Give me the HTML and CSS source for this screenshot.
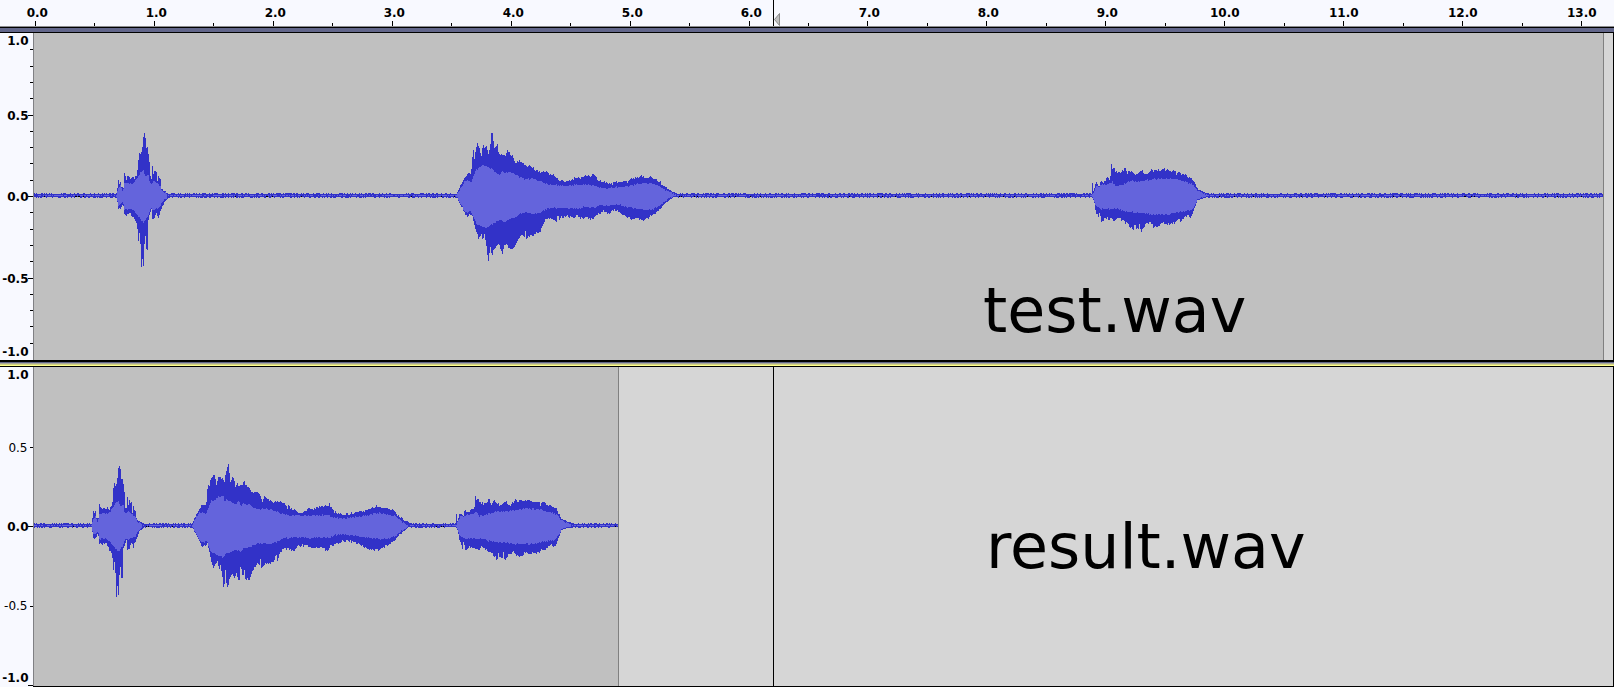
FILE: index.html
```html
<!DOCTYPE html>
<html lang="en">
<head>
<meta charset="utf-8">
<title>Audio tracks</title>
<link rel="stylesheet" href="styles.css">
</head>
<body>
<main class="editor">
  <header class="timeline">
    <svg class="timeline-scale" id="timeline" width="1614" height="26"></svg>
    <svg class="playhead" width="8" height="26" viewBox="0 0 8 26">
      <path d="M0 0h1v26h-1z" fill="#000"/>
      <path d="M1.5 19.5L6.5 13.5V25.5Z" fill="#c0c0c0" stroke="#8a8a8a"/>
    </svg>
  </header>
  <div class="divider"></div>
  <section class="track track-test">
    <svg class="level-scale" id="scale-test" width="33" height="327"></svg>
    <div class="lane">
      <div class="clip"><svg class="wave" id="wave-test" width="1569" height="327" viewBox="34 33 1569 327"></svg></div>
      <span class="name">test.wav</span>
    </div>
  </section>
  <div class="divider-focus"></div>
  <section class="track track-result">
    <svg class="level-scale" id="scale-result" width="33" height="319"></svg>
    <div class="lane">
      <div class="clip"><svg class="wave" id="wave-result" width="584" height="319" viewBox="34 367 584 319"></svg></div>
      <i class="cursor"></i>
      <span class="name">result.wav</span>
    </div>
  </section>
  <footer class="bottom-edge"></footer>
</main>
<script src="tracks.js"></script>
</body>
</html>
```
FILE: styles.css
```css
body {
  margin: 0;
  background: #f8f9ff;
  font-family: "DejaVu Sans", sans-serif;
  color: #000;
}
.editor {
  width: 1614px;
  height: 687px;
  display: flex;
  flex-direction: column;
  overflow: hidden;
}
svg { display: block; }
.timeline {
  position: relative;
  height: 26px;
  border-bottom: 1px solid #8c8c90;
}
.playhead { position: absolute; left: 773px; top: 0; }
.scale-label { font-size: 12px; fill: #000; }
.strong { font-weight: bold; }
.divider {
  height: 4px;
  background: #62668a;
  border-top: 1px solid #000;
  border-bottom: 1px solid #000;
}
.divider-focus {
  height: 7px;
  background: linear-gradient(#000 0 2px, #62668a 2px 3px, #a9a99b 3px 4px, #d0d080 4px 5px, #ffff8c 5px 6px, #000 6px);
}
.track { display: flex; }
.track-test { height: 327px; }
.track-result { height: 319px; }
.lane {
  position: relative;
  flex: 1;
  background: #d6d6d6;
  border-left: 1px solid #808084;
  border-right: 1px solid #000;
}
.clip {
  width: max-content;
  background: #c0c0c0;
  border-right: 1px solid #808080;
}
.wave { shape-rendering: crispEdges; }
.peak { fill: #3232c8; }
.rms { fill: #6464dc; }
.cursor {
  position: absolute;
  left: 739px;
  top: 0;
  bottom: 0;
  width: 1px;
  background: #000;
}
.name {
  position: absolute;
  font-size: 61.8px;
  line-height: 72px;
  white-space: nowrap;
}
.track-test .name { left: 949px; top: 242px; }
.track-result .name { left: 952px; top: 144px; }
.bottom-edge {
  height: 1px;
  margin-left: 33px;
  background: #000;
}
```
FILE: tracks.js
```js
const NS = 'http://www.w3.org/2000/svg';

function add(parent, tag, attrs, text) {
  const node = document.createElementNS(NS, tag);
  for (const key in attrs) node.setAttribute(key, attrs[key]);
  if (text) node.textContent = text;
  parent.appendChild(node);
}

// Time ruler: one long tick per second, one short tick per half second.
const timeline = document.getElementById('timeline');
for (let i = 0; i <= 26; i++) {
  const x = Math.round(35 + i * 59.46);
  const major = i % 2 === 0;
  add(timeline, 'rect', { x, y: major ? 21 : 23, width: 1, height: major ? 5 : 3 });
  if (major) {
    const label = (i / 2).toFixed(1);
    add(timeline, 'text', { x: x - (label.length > 3 ? 14 : 8.3), y: 17, class: 'scale-label strong' }, label);
  }
}

// Level rulers: [label, baseline, bold]; ticks are [y, length].
function levelScale(id, labels, ticks) {
  const svg = document.getElementById(id);
  for (const [text, y, bold] of labels)
    add(svg, 'text', { x: bold ? 28.5 : 27.5, y, 'text-anchor': 'end', class: 'scale-label' + (bold ? ' strong' : '') }, text);
  for (const [y, length] of ticks)
    add(svg, 'rect', { x: 33 - length, y, width: length, height: 1 });
}
const testTicks = [];
for (let i = -9; i <= 9; i++) testTicks.push([Math.round(163 + i * 16.3), i % 5 === 0 ? 5 : 3]);
levelScale('scale-test',
  [['1.0', 12, 1], ['0.5', 87, 1], ['0.0', 168, 1], ['-0.5', 250, 1], ['-1.0', 323, 1]], testTicks);
levelScale('scale-result',
  [['1.0', 12, 1], ['0.5', 85, 0], ['0.0', 164, 1], ['-0.5', 243, 0], ['-1.0', 315, 1]],
  [[80, 3], [159, 5], [239, 3], [318, 5]]);

// Envelopes, in thirds of a pixel from the origin (x, y).
const first = {
  x: 100, y: 120,
  peakTop: [48,222,51,205,54,182,57,190,60,185,63,200,69,203,72,162,78,175,84,170,90,178,96,170,102,175,108,165,111,150,114,115,117,98,120,105,123,98,126,80,129,50,132,42,135,55,138,82,141,80,144,100,147,125,150,170,153,175,156,140,159,160,162,152,168,158,171,185,174,168,177,175,180,180,183,205,189,212,195,215,201,220],
  peakBottom: [48,232,51,245,54,265,60,268,66,255,69,260,72,282,81,284,90,280,96,290,102,300,108,310,111,328,114,365,117,340,120,375,123,443,126,415,129,437,132,375,135,350,138,387,141,385,144,300,148,285,153,270,156,300,162,295,168,278,174,292,180,275,186,262,192,245,200,238,207,232],
  rmsTop: [48,224,54,207,60,198,66,213,72,190,84,190,96,190,105,182,114,170,120,158,129,152,135,168,144,162,148,190,153,190,160,182,170,190,180,200,186,215,200,220],
  rmsBottom: [48,232,54,255,62,252,68,245,72,268,84,266,94,268,105,278,114,290,129,308,138,295,144,285,150,268,160,270,170,265,180,260,186,245,200,234]
};
const second = {
  x: 450, y: 125,
  peakTop: [18,208,27,190,33,176,42,158,48,150,54,145,60,148,64,125,67,85,70,72,73,110,76,65,82,55,87,68,93,95,97,58,103,65,109,62,113,92,118,72,121,45,124,18,127,30,130,52,133,75,137,65,141,58,145,85,148,95,154,82,160,92,166,92,170,72,175,80,180,92,188,92,192,110,200,112,207,106,215,112,222,122,230,128,238,122,248,130,260,138,272,140,284,138,292,142,300,148,310,150,318,160,330,168,345,168,360,168,370,160,385,160,395,158,405,152,420,154,428,145,434,152,440,164,452,170,465,172,475,178,490,174,505,172,520,168,532,172,540,164,552,160,565,156,574,152,585,158,600,156,610,162,620,165,630,172,638,184,648,188,656,196,668,200,678,206],
  peakBottom: [18,214,27,232,35,248,42,265,50,275,57,270,65,268,70,290,75,315,80,320,83,345,88,335,94,325,98,350,102,325,106,350,109,372,112,395,115,413,118,370,121,360,124,398,130,375,138,362,146,360,150,370,155,387,160,365,168,355,175,370,177,372,178,340,180,372,182,375,190,370,197,355,207,340,215,325,222,338,224,345,226,288,228,345,232,335,240,330,252,328,260,322,270,318,272,320,274,290,276,300,285,282,300,280,320,290,322,256,325,285,335,275,350,272,365,278,380,272,395,280,405,275,420,285,432,275,445,265,460,258,475,265,490,254,505,260,520,270,532,276,545,283,560,280,575,286,590,280,605,272,618,262,630,248,640,240,655,228,670,216,678,212],
  rmsTop: [18,210,30,190,42,170,52,165,62,175,70,150,76,136,88,126,96,122,106,120,118,128,130,138,148,150,156,138,165,145,175,140,188,145,205,155,225,164,245,160,265,168,285,175,310,180,345,182,370,180,400,178,430,180,450,188,475,190,500,186,530,184,560,178,580,174,605,176,625,182,640,192,655,200,675,208],
  rmsBottom: [18,213,30,235,42,258,52,262,62,258,70,280,78,295,92,302,106,308,116,304,130,295,148,285,160,290,175,284,195,278,205,268,225,262,250,268,270,262,290,252,310,248,350,250,380,252,400,246,430,248,450,240,475,242,500,238,530,246,560,250,580,254,610,252,630,240,645,228,660,218,675,212]
};
const secondTrimmed = {
  x: 185, y: 455,
  peakTop: [21,208,27,190,33,178,42,162,48,152,54,148,62,152,65,125,67,85,70,90,73,98,76,68,82,64,86,57,90,75,93,88,97,78,100,65,106,68,112,72,117,82,121,52,125,45,128,24,131,40,134,80,138,75,142,60,146,75,150,98,155,84,161,94,170,90,176,75,181,90,190,96,196,112,205,114,212,108,220,115,226,122,232,145,236,124,244,132,258,136,268,142,280,140,292,140,300,150,306,158,310,145,316,160,330,166,345,172,360,168,370,162,385,163,395,158,405,154,420,154,432,148,438,158,445,168,458,176,475,178,490,176,505,174,520,168,535,170,545,164,560,158,574,154,585,160,600,160,612,162,625,166,634,178,642,186,650,188,656,198,668,200,678,206],
  peakBottom: [21,214,27,230,35,245,42,260,52,275,60,270,66,265,72,290,76,312,84,340,90,330,97,320,101,348,106,328,109,355,112,375,115,408,118,375,119,325,122,380,127,397,133,370,141,358,148,370,154,350,158,380,163,375,166,315,169,355,175,358,178,334,180,370,186,372,193,372,200,350,210,332,220,325,224,330,226,292,228,340,236,328,250,325,262,320,269,315,271,290,276,320,282,295,290,285,300,280,315,284,325,287,335,275,350,270,370,276,390,278,405,276,424,288,434,275,450,266,470,260,490,258,510,262,530,272,548,282,575,285,595,278,610,268,630,256,640,240,655,230,668,218,678,212],
  rmsTop: [21,210,30,190,42,174,52,170,62,178,70,155,78,138,90,132,100,126,113,122,118,142,124,132,140,145,152,148,160,138,166,152,172,146,190,148,205,158,225,164,245,160,265,166,285,174,310,180,345,183,370,182,400,180,430,180,445,188,475,190,500,187,530,183,560,178,580,174,610,178,628,182,640,194,655,204,668,212],
  rmsBottom: [21,213,30,235,42,256,52,264,62,258,70,275,78,292,92,298,113,308,120,298,140,288,155,284,165,290,172,282,190,278,210,268,235,264,250,268,275,260,295,250,325,248,350,246,380,250,400,246,430,248,450,240,475,238,500,242,530,245,560,250,580,252,610,250,630,242,645,230,660,220,672,213]
};
const third = {
  x: 1080, y: 155,
  peakTop: [34,116,36,84,39,110,42,100,46,80,50,88,57,90,62,76,68,80,76,76,82,65,88,76,91,58,93,30,97,45,101,38,105,48,112,52,120,56,130,46,135,40,140,58,148,45,155,52,165,58,175,55,182,45,190,52,196,60,206,52,214,40,220,52,226,45,240,46,252,42,262,46,272,50,284,45,288,62,292,52,300,54,312,60,325,66,334,68,341,82,347,92,352,104,364,106,370,112,385,114],
  peakBottom: [34,125,38,132,43,150,46,176,50,175,54,190,58,168,62,200,67,198,74,186,85,192,95,190,103,200,110,186,120,190,130,200,140,204,146,212,152,216,158,228,164,200,166,226,170,212,173,225,177,205,182,234,188,218,196,208,208,202,220,216,235,212,245,202,260,208,275,206,285,202,292,194,302,198,312,186,322,180,330,188,338,172,345,152,350,138,362,132,375,128,385,126],
  rmsTop: [34,120,40,110,48,92,60,90,72,88,84,86,96,80,105,92,120,90,140,82,155,78,175,80,200,76,220,72,255,70,285,72,305,78,325,84,340,90,350,106,365,112,380,120],
  rmsBottom: [34,124,40,138,48,154,60,162,80,160,95,165,110,160,130,168,160,172,200,176,220,178,250,178,280,176,300,170,330,166,340,155,350,138,362,130,380,124]
};

function sample(points, u) {
  if (u < points[0] || u > points[points.length - 2]) return null;
  let i = 0;
  while (i < points.length - 4 && points[i + 2] < u) i += 2;
  const t = (u - points[i]) / (points[i + 2] - points[i]);
  return points[i + 1] + t * (points[i + 3] - points[i + 1]);
}

function drawWave(id, from, to, zero, sounds, seed) {
  const random = () => (seed = (seed * 16807) % 2147483647) / 2147483647;
  const column = (x, top, bottom) => `M${x} ${top}h1V${bottom}h-1z`;
  const svg = document.getElementById(id);
  let peak = '', rms = '';
  for (let x = from; x < to; x++) {
    let top = zero - 2 - (random() < 0.4 ? 1 : 0);
    let bottom = zero + 1 + (random() < 0.4 ? 1 : 0);
    const lit = random() < 0.6;
    let innerTop = zero - 1, innerBottom = lit ? zero : zero - 1;
    if (!lit && random() < 0.12) bottom = zero;
    for (const { shape, shift, dy, gain } of sounds) {
      const u = (x - shape.x - shift) * 3;
      const level = key => {
        const v = sample(shape[key], u);
        if (v === null) return null;
        return zero + (shape.y + dy + v / 3 - zero) * gain;
      };
      const a = level('peakTop'), b = level('peakBottom');
      const c = level('rmsTop'), d = level('rmsBottom');
      const wobble = (v, amount) => Math.round(v + (random() - 0.5) * amount);
      if (a !== null) top = Math.min(top, wobble(a, Math.min(2.5, (zero - a) / 5)));
      if (b !== null) bottom = Math.max(bottom, wobble(b, Math.min(2.5, (b - zero) / 5)));
      if (c !== null && d !== null) {
        innerTop = Math.max(top + 1, Math.min(zero - 1, wobble(c, 1.6)));
        innerBottom = Math.min(bottom - 1, Math.max(zero + 1, wobble(d, 1.6)));
      }
    }
    peak += column(x, top, bottom);
    if (innerBottom > innerTop) rms += column(x, innerTop, innerBottom);
  }
  add(svg, 'rect', { x: from, y: zero, width: to - from, height: 1 });
  add(svg, 'path', { d: peak, class: 'peak' });
  add(svg, 'path', { d: rms, class: 'rms' });
}

drawWave('wave-test', 34, 1603, 196, [
  { shape: first, shift: 0, dy: 0, gain: 1 },
  { shape: second, shift: 0, dy: 0, gain: 1 },
  { shape: third, shift: 0, dy: 0, gain: 1 }
], 4711);
drawWave('wave-result', 34, 618, 526, [
  { shape: first, shift: -25, dy: 330, gain: 0.975 },
  { shape: secondTrimmed, shift: 0, dy: 0, gain: 1 },
  { shape: third, shift: -636, dy: 330, gain: 0.98 }
], 1234);
```
